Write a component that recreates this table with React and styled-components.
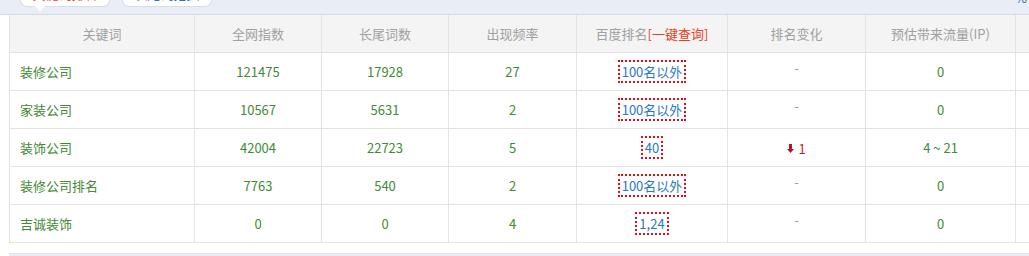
import React from "react";
import styled, { createGlobalStyle } from "styled-components";

const rows = [
  { kw: "装修公司", idx: "121475", tail: "17928", freq: "27", rank: "100名以外", change: null, flow: "0" },
  { kw: "家装公司", idx: "10567", tail: "5631", freq: "2", rank: "100名以外", change: null, flow: "0" },
  { kw: "装饰公司", idx: "42004", tail: "22723", freq: "5", rank: "40", change: "1", flow: "4 ~ 21" },
  { kw: "装修公司排名", idx: "7763", tail: "540", freq: "2", rank: "100名以外", change: null, flow: "0" },
  { kw: "吉诚装饰", idx: "0", tail: "0", freq: "4", rank: "1,24", change: null, flow: "0" },
];

const widths = [185, 127, 127, 128, 151, 138, 150, 120];

export default function App() {
  return (
    <>
      <GlobalStyle />
      <StTabBar>
        <StTab $active>关键词排名</StTab>
        <StTab>长尾词挖掘</StTab>
        <StTabExtra>%</StTabExtra>
      </StTabBar>
      <StWrap>
        <StTable>
          <colgroup>
            {widths.map((w, i) => (
              <col key={i} style={{ width: w }} />
            ))}
          </colgroup>
          <thead>
            <tr>
              <StTh>关键词</StTh>
              <StTh>全网指数</StTh>
              <StTh>长尾词数</StTh>
              <StTh>出现频率</StTh>
              <StTh>
                百度排名<StQuery>[一键查询]</StQuery>
              </StTh>
              <StTh>排名变化</StTh>
              <StTh>预估带来流量(IP)</StTh>
              <StTh />
            </tr>
          </thead>
          <tbody>
            {rows.map((r) => (
              <tr key={r.kw}>
                <StTd $left>{r.kw}</StTd>
                <StTd>{r.idx}</StTd>
                <StTd>{r.tail}</StTd>
                <StTd>{r.freq}</StTd>
                <StTd>
                  <StRank>{r.rank}</StRank>
                </StTd>
                <StTd>
                  {r.change ? (
                    <StDown>
                      <svg width="7" height="9" viewBox="0 0 7 9">
                        <path d="M2 0h3v5h2L3.5 9 0 5h2z" fill="#b3182a" />
                      </svg>
                      {r.change}
                    </StDown>
                  ) : (
                    <StDash>-</StDash>
                  )}
                </StTd>
                <StTd>{r.flow}</StTd>
                <StTd />
              </tr>
            ))}
          </tbody>
        </StTable>
        <StNextBand />
      </StWrap>
    </>
  );
}

const GlobalStyle = createGlobalStyle`
  body {
    margin: 0;
    background: #fff;
    overflow: hidden;
    font-family: "Noto Sans CJK SC", "Noto Sans", sans-serif;
    font-size: 13px;
  }
`;

const StTabBar = styled.div`
  height: 14px;
  background: #e9edf5;
  border-bottom: 1px solid #d3dae8;
  display: flex;
  gap: 12px;
  padding-left: 20px;
  overflow: hidden;
  position: relative;
`;

const StTab = styled.div`
  width: 90px;
  height: 24px;
  margin-top: -17px;
  box-sizing: border-box;
  border: 1px solid #d6dce8;
  border-radius: 0 0 7px 7px;
  background: #fff;
  color: ${(p) => (p.$active ? "#e03c1e" : "#2d6fb8")};
  font-size: 13px;
  line-height: 19px;
  text-align: center;
  position: relative;
  overflow: visible;

  &::after {
    content: "";
    display: ${(p) => (p.$active ? "block" : "none")};
    position: absolute;
    left: 14px;
    bottom: -6px;
    border-left: 5px solid transparent;
    border-right: 5px solid transparent;
    border-top: 6px solid #fff;
  }
`;

const StTabExtra = styled.div`
  margin-left: auto;
  margin-right: 2px;
  margin-top: -12px;
  color: #2d6fb8;
  font-size: 13px;
`;

const StWrap = styled.div`
  margin-left: 9px;
  width: 1100px;
`;

const StTable = styled.table`
  border-collapse: collapse;
  table-layout: fixed;
  width: 1126px;
  border-left: 1px solid #e3e3e3;
`;

const StTh = styled.th`
  height: 37px;
  padding: 0;
  background: #f4f4f4;
  color: #a0a0a0;
  font-weight: normal;
  text-align: center;
  border-right: 1px solid #e3e3e3;
  border-bottom: 1px solid #e3e3e3;
`;

const StQuery = styled.span`
  color: #e4421f;
`;

const StTd = styled.td`
  height: 37px;
  padding: 0 0 0 ${(p) => (p.$left ? "10px" : "0")};
  color: #3f8a34;
  text-align: ${(p) => (p.$left ? "left" : "center")};
  border-right: 1px solid #e3e3e3;
  border-bottom: 1px solid #e3e3e3;
`;

const StRank = styled.span`
  display: inline-block;
  border: 2px dotted #d9101a;
  padding: 1px 2px;
  line-height: 17px;
  color: #2a77c4;
`;

const StDash = styled.span`
  color: #999;
  position: relative;
  top: -4px;
`;

const StDown = styled.span`
  display: inline-flex;
  align-items: center;
  gap: 4px;
  color: #c8182c;
`;

const StNextBand = styled.div`
  margin-top: 10px;
  height: 6px;
  background: #e9ebf6;
  border-top: 1px solid #dfe2ee;
`;
